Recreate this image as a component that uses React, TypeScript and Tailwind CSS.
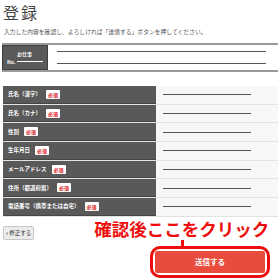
import React from "react";

const rows = [
  "氏名（漢字）",
  "氏名（カナ）",
  "性別",
  "生年月日",
  "メールアドレス",
  "住所（都道府県）",
  "電話番号（携帯または自宅）",
];

function Badge() {
  return (
    <span className="ml-[5px] inline-flex h-[9px] items-center rounded-[1px] bg-white px-[2px] text-[5px] font-bold leading-none text-[#d9161b]">
      必須
    </span>
  );
}

export default function App() {
  return (
    <div
      className="h-[280px] w-[280px] overflow-hidden bg-white text-[#333]"
      style={{ fontFamily: '"Noto Sans CJK JP", "Noto Sans", sans-serif' }}
    >
      {/* Header */}
      <h1 className="pl-[3px] pt-[2px] text-[16px] leading-[20px] tracking-[2px] text-[#444]">登録</h1>
      <p className="mt-[6px] pl-[4px] text-[5.8px] leading-[8px] text-[#555]">
        入力した内容を確認し、よろしければ「送信する」ボタンを押してください。
      </p>

      {/* Job box */}
      <div className="ml-[2px] mr-[2px] mt-[7px] flex h-[29px] border-y-2 border-[#9a9a9a]">
        <div className="flex w-[46px] flex-col justify-center border border-[#3f3f3f] bg-[#5a5a5a] px-[4px] text-[5px] font-bold text-white">
          <div className="pl-[10px] leading-[8px]">お仕事</div>
          <div className="flex items-center leading-[8px]">
            No.
            <span className="ml-[2px] h-px flex-1 bg-white" />
          </div>
        </div>
        <div className="flex flex-1 flex-col justify-center gap-[11px] pl-[9px] pr-[12px]">
          <div className="h-px bg-[#555]" />
          <div className="h-px bg-[#555]" />
        </div>
      </div>

      {/* Table */}
      <div className="ml-[3px] mr-[2px] mt-[14px] flex flex-col">
        {rows.map((r) => (
          <div key={r} className="flex h-[18.7px] border-b border-[#e2e2e2]">
            <div className="flex w-[153px] items-center border-b border-[#454545] bg-[#595959] pl-[5px] text-[5.5px] font-bold text-white">
              {r}
              <Badge />
            </div>
            <div className="flex flex-1 items-center bg-[#f7f7f7] pl-[7px] pr-[27px]">
              <div className="h-px flex-1 bg-[#555]" />
            </div>
          </div>
        ))}
      </div>

      {/* Bottom area */}
      <div className="relative mt-[3px] flex">
        <div className="pl-[3px] pt-[6px]">
          <button className="flex h-[14px] items-center rounded-[2px] border border-[#c8c8c8] bg-[#ececec] px-[2px] text-[5.5px] text-[#333]">
            <span className="mr-px text-[7px] leading-none">‹</span>修正する
          </button>
        </div>
        <div className="ml-[60px] flex flex-col items-center">
          <div className="text-[17.5px] font-bold leading-[18px] text-[#ee0d0d]">
            確認後ここをクリック
          </div>
        </div>
      </div>
      <div className="flex flex-col items-start pl-[150px]">
        <div className="ml-[31px] h-[6px] w-[3px] bg-[#ee0d0d]" />
        <div className="rounded-[10px] border-[3px] border-[#ee0d0d] bg-white p-[2px]">
          <div className="flex h-[22px] w-[110px] items-center justify-center rounded-[2px] bg-[#e74c3c] text-[7.5px] font-bold text-white">
            送信する
          </div>
        </div>
      </div>
    </div>
  );
}
